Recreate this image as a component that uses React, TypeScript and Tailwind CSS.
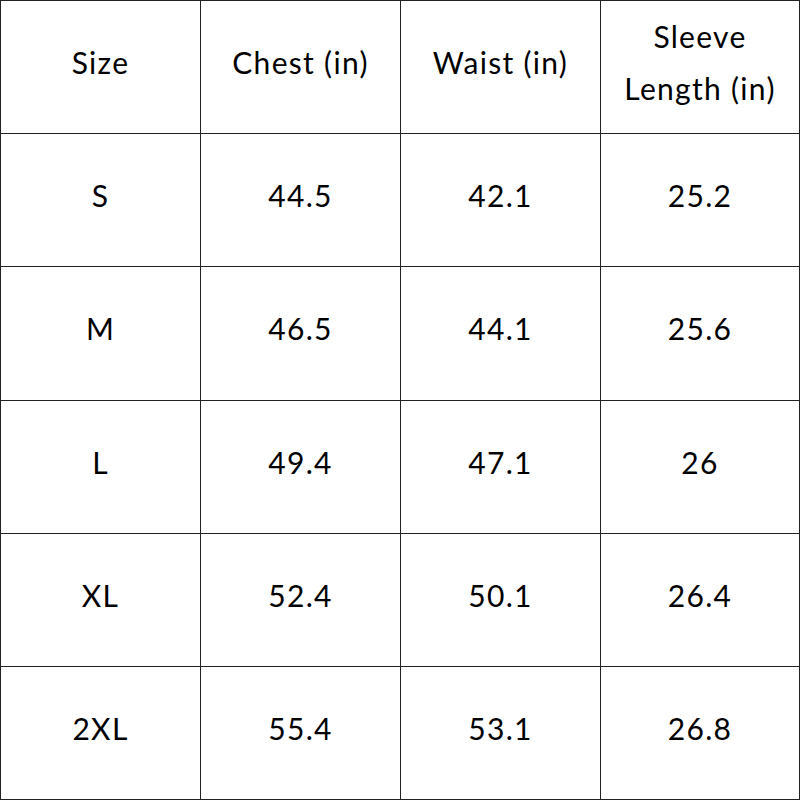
const HEADERS = ['Size', 'Chest (in)', 'Waist (in)', 'Sleeve Length (in)']

const ROWS = [
  ['S', '44.5', '42.1', '25.2'],
  ['M', '46.5', '44.1', '25.6'],
  ['L', '49.4', '47.1', '26'],
  ['XL', '52.4', '50.1', '26.4'],
  ['2XL', '55.4', '53.1', '26.8'],
]

function Cell({ children, last, bottom }: { children: React.ReactNode; last: boolean; bottom: boolean }) {
  return (
    <div
      className={`flex items-center justify-center border-l border-t border-[#222] px-4 pb-[11px] text-center leading-[52px] tracking-[1.3px] ${
        last ? 'border-r' : ''
      } ${bottom ? 'border-b' : ''}`}
    >
      {children}
    </div>
  )
}

export default function App() {
  return (
    <div
      className="grid h-[800px] w-[800px] grid-cols-[200px_200px_200px_200px] grid-rows-[133px_133px_134px_133px_133px_134px] bg-white text-[30px] text-black"
      style={{ fontFamily: 'Lato, "Open Sans", sans-serif' }}
    >
      {HEADERS.map((h, i) => (
        <Cell key={h} last={i === 3} bottom={false}>
          {h}
        </Cell>
      ))}
      {ROWS.map((row, r) =>
        row.map((v, i) => (
          <Cell key={`${r}-${i}`} last={i === 3} bottom={r === ROWS.length - 1}>
            {v}
          </Cell>
        )),
      )}
    </div>
  )
}
